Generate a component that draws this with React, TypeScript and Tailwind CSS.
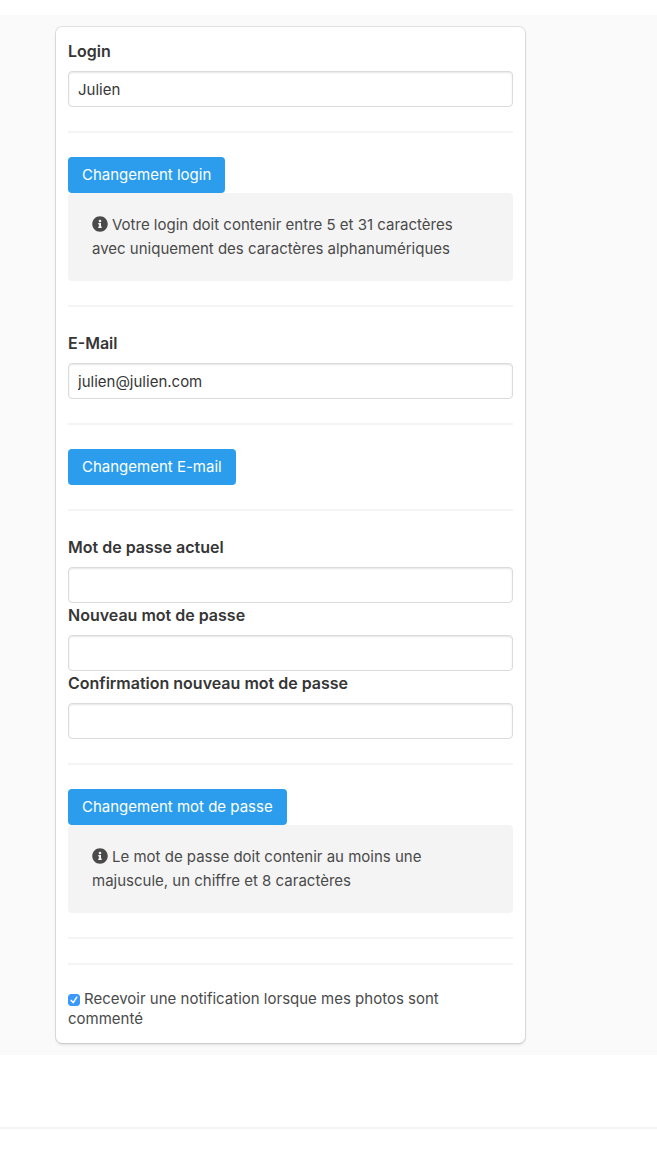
import type { ReactNode } from "react";
import { FaInfoCircle } from "react-icons/fa";

function Divider() {
  return <hr className="my-6 h-[2px] border-0 bg-[#f4f4f4]" />;
}

function Field({ id, label, type = "text", value = "" }: { id: string; label: string; type?: string; value?: string }) {
  return (
    <div>
      <label htmlFor={id} className="mb-2 block text-base leading-6 font-semibold text-[#363636]">
        {label}
      </label>
      <input
        id={id}
        type={type}
        defaultValue={value}
        className="block h-9 w-full rounded border border-[#dbdbdb] bg-white px-[9px] leading-6 text-[#363636] shadow-[inset_0_1px_2px_rgba(10,10,10,0.1)] outline-none focus:border-[#3273dc]"
      />
    </div>
  );
}

function Action({ children }: { children: ReactNode }) {
  return (
    <button type="submit" className="block h-9 cursor-pointer rounded bg-[#2b9dec] px-[14px] leading-6 text-white hover:bg-[#1496ed]">
      {children}
    </button>
  );
}

function Notice({ children }: { children: ReactNode }) {
  return (
    <div className="rounded bg-[#f4f4f4] py-5 pr-10 pl-6 leading-6">
      <FaInfoCircle className="mr-1 inline-block size-4 align-[-2px]" aria-hidden="true" />
      {children}
    </div>
  );
}

export default function App() {
  return (
    <div className="bg-white font-['Inter','Liberation_Sans',sans-serif] text-[15px] text-[#4a4a4a]">
      <main className="mt-[15px] bg-[#fafafa] pt-3 pr-[132px] pb-3 pl-14">
        <form
          onSubmit={(e) => e.preventDefault()}
          className="rounded-md bg-white px-3 pt-3 pb-[14px] shadow-[0_2px_3px_rgba(10,10,10,0.1),0_0_0_1px_rgba(10,10,10,0.1)]"
        >
          <Field id="login" label="Login" value="Julien" />
          <Divider />
          <Action>Changement login</Action>
          <Notice>Votre login doit contenir entre 5 et 31 caractères avec uniquement des caractères alphanumériques</Notice>
          <Divider />
          <Field id="email" label="E-Mail" type="email" value="julien@julien.com" />
          <Divider />
          <Action>Changement E-mail</Action>
          <Divider />
          <Field id="current-password" label="Mot de passe actuel" type="password" />
          <Field id="new-password" label="Nouveau mot de passe" type="password" />
          <Field id="confirm-password" label="Confirmation nouveau mot de passe" type="password" />
          <Divider />
          <Action>Changement mot de passe</Action>
          <Notice>Le mot de passe doit contenir au moins une majuscule, un chiffre et 8 caractères</Notice>
          <Divider />
          <Divider />
          <label className="block cursor-pointer leading-5">
            <span className="mr-1 inline-grid size-3 align-[-2px]">
              <input
                type="checkbox"
                defaultChecked
                className="peer col-start-1 row-start-1 size-3 appearance-none rounded-[3px] border border-[#b5b5b5] bg-white checked:border-[#3b99fc] checked:bg-[#3b99fc]"
              />
              <svg viewBox="0 0 12 12" className="pointer-events-none invisible col-start-1 row-start-1 size-3 peer-checked:visible" aria-hidden="true">
                <path d="M3.2 6.4 5.2 8.6 8.8 3.2" fill="none" stroke="white" strokeWidth="1.5" strokeLinecap="round" strokeLinejoin="round" />
              </svg>
            </span>
            Recevoir une notification lorsque mes photos sont commenté
          </label>
        </form>
      </main>
      <footer className="pt-[72px] pb-10">
        <hr className="h-[2px] border-0 bg-[#f4f4f4]" />
      </footer>
    </div>
  );
}
